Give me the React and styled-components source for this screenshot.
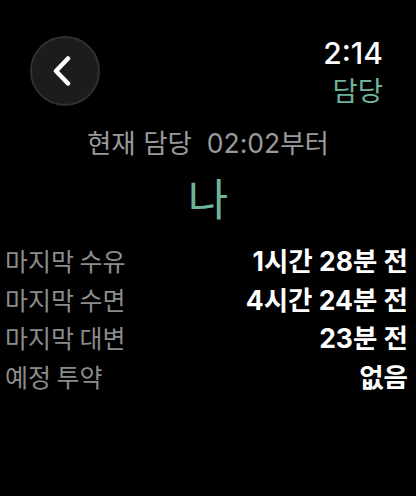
import React from "react";
import styled, { createGlobalStyle } from "styled-components";

const Global = createGlobalStyle`
  html, body { margin: 0; padding: 0; background: #000; }
  body { font-family: Inter, "Noto Sans CJK KR", sans-serif; }
`;

const Screen = styled.div`
  width: 416px;
  height: 496px;
  background: #000;
  display: flex;
  flex-direction: column;
  overflow: hidden;
`;

const Header = styled.div`
  display: flex;
  justify-content: space-between;
  align-items: flex-start;
  padding: 36px 33px 0 30px;
`;

const BackButton = styled.button`
  width: 70px;
  height: 70px;
  border-radius: 50%;
  background: #1c1c1c;
  border: 2px solid #303030;
  box-sizing: border-box;
  display: flex;
  align-items: center;
  justify-content: center;
  padding: 0;
  cursor: pointer;
`;

const Status = styled.div`
  display: flex;
  flex-direction: column;
  align-items: flex-end;
  margin-top: -1px;
`;

const Clock = styled.div`
  font-family: Inter, Roboto, sans-serif;
  font-size: 30px;
  font-weight: 500;
  line-height: 36px;
  color: #fff;
`;

const Role = styled.div`
  font-family: "Noto Sans CJK KR", sans-serif;
  font-size: 27.5px;
  line-height: 36px;
  color: #6eb49b;
`;

const Current = styled.div`
  display: flex;
  flex-direction: column;
  align-items: center;
  margin-top: 19px;
`;

const Caption = styled.div`
  font-family: Inter, "Noto Sans CJK KR", sans-serif;
  font-size: 26.5px;
  line-height: 34px;
  color: #9a9a9a;
  white-space: pre;
`;

const Person = styled.div`
  font-family: "Noto Sans CJK KR", sans-serif;
  font-size: 44px;
  line-height: 56px;
  margin-top: 9px;
  color: #6eb49b;
`;

const InfoList = styled.div`
  display: flex;
  flex-direction: column;
  padding: 0 8px 0 5px;
  margin-top: 16px;
`;

const InfoRow = styled.div`
  display: flex;
  justify-content: space-between;
  align-items: baseline;
  height: 38.7px;
  line-height: 38.7px;
`;

const Label = styled.span`
  font-family: "Noto Sans CJK KR", sans-serif;
  font-size: 25px;
  color: #8c8c8c;
`;

const Value = styled.span`
  font-family: Inter, "Noto Sans CJK KR", sans-serif;
  font-size: 26.5px;
  font-weight: 700;
  color: #fff;
`;

const rows = [
  ["마지막 수유", "1시간 28분 전"],
  ["마지막 수면", "4시간 24분 전"],
  ["마지막 대변", "23분 전"],
  ["예정 투약", "없음"],
];

export default function App() {
  return (
    <>
      <Global />
      <Screen>
        <Header>
          <BackButton aria-label="뒤로">
            <svg width="24" height="32" viewBox="0 0 24 32">
              <path d="M15 3.5 L3 16 L15 28.5" fill="none" stroke="#fff" strokeWidth="4.5" strokeLinecap="round" strokeLinejoin="round" />
            </svg>
          </BackButton>
          <Status>
            <Clock>2:14</Clock>
            <Role>담당</Role>
          </Status>
        </Header>
        <Current>
          <Caption>{"현재 담당  02:02부터"}</Caption>
          <Person>나</Person>
        </Current>
        <InfoList>
          {rows.map(([l, v]) => (
            <InfoRow key={l}>
              <Label>{l}</Label>
              <Value>{v}</Value>
            </InfoRow>
          ))}
        </InfoList>
      </Screen>
    </>
  );
}
